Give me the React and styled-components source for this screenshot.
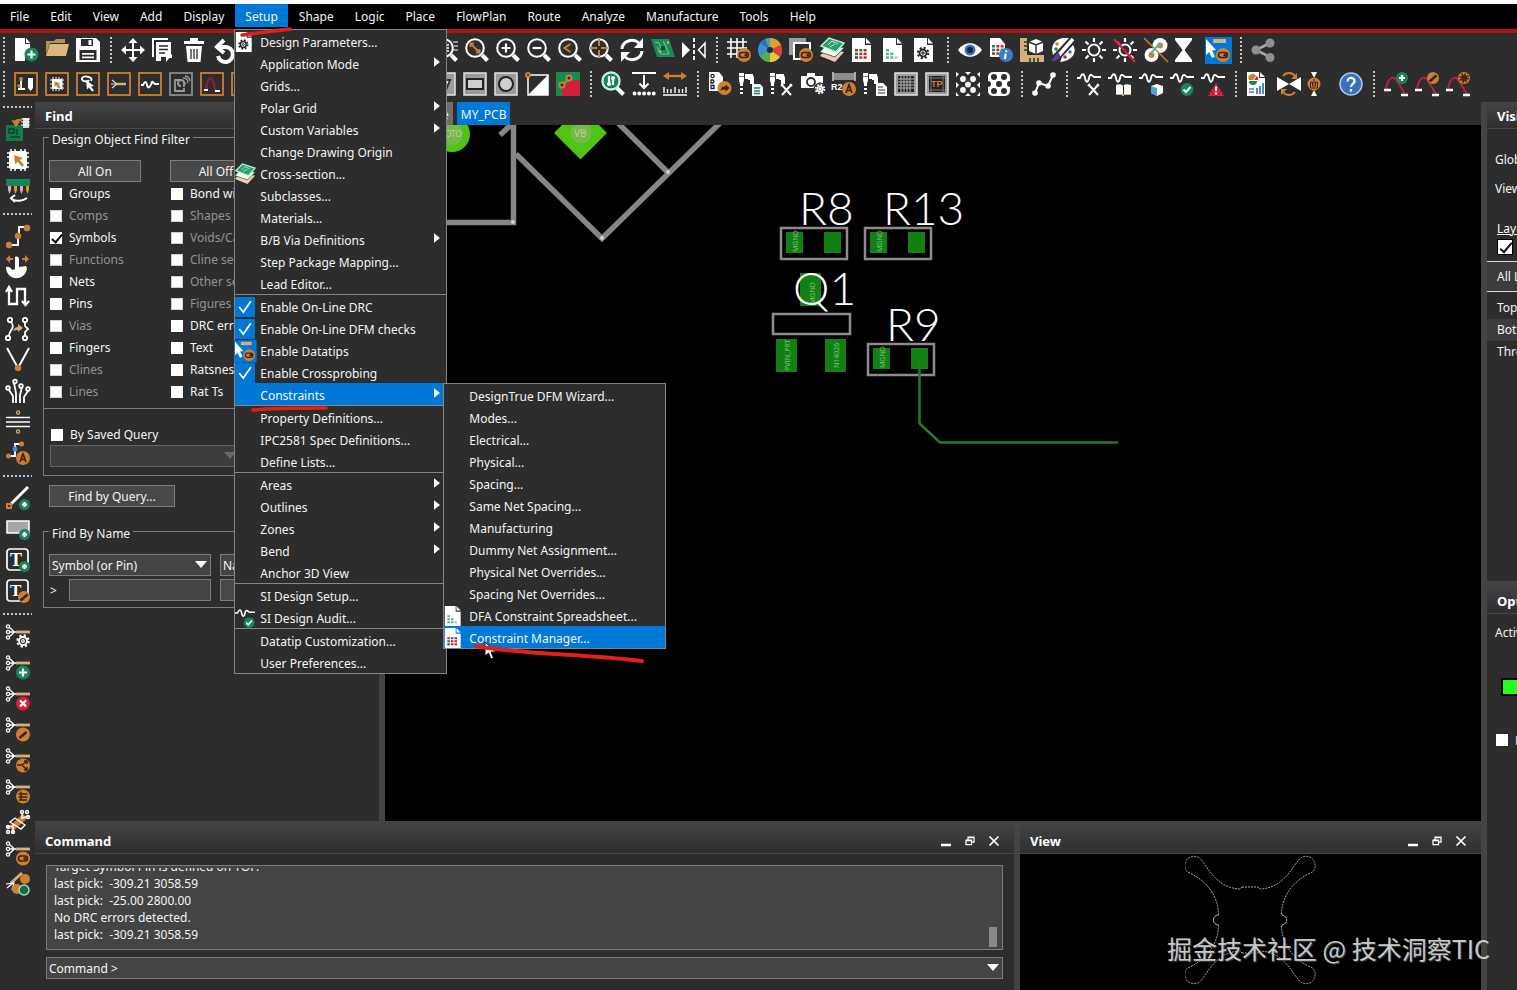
import React, { useState } from 'react'
import styled, { createGlobalStyle, css } from 'styled-components'

const ORANGE = '#cd7f32'
const GREEN = '#17855a'
const TAN = '#d3b07c'
const BLUE = '#0078d7'
const RED = '#d21f3c'
const W = '#ffffff'
const BG = '#2d2d2d'

/* ---------- icon pieces ---------- */

const Svg = ({ size = 24, children }) => (
    <svg width={size} height={size} viewBox="0 0 24 24" fill="none" aria-hidden="true">{children}</svg>
)
const Page = ({ x = 0 }) => <path d={`M${x + 1} 0h13v7h6v17h-19z M${x + 15} 0l5 5.500h-5z`} fill={W} />
const Plus = ({ cx = 17, cy = 17, r = 7 }) => (
    <g>
        <circle cx={cx} cy={cy} r={r} fill={GREEN} />
        <path d={`M${cx - r + 3} ${cy}h${2 * r - 6}M${cx} ${cy - r + 3}v${2 * r - 6}`} stroke={W} strokeWidth="2.200" />
    </g>
)
const Disc = ({ cx = 17, cy = 17, r = 7, fill = ORANGE, children }) => (
    <g>
        <circle cx={cx} cy={cy} r={r} fill={fill} />
        {children}
    </g>
)
const Pencil = ({ cx = 17, cy = 17 }) => (
    <path d={`M${cx - 3.5} ${cy + 3.5}l7-6`} stroke="#3a2410" strokeWidth="2.600" />
)
const Toggle = ({ cx = 17, cy = 17 }) => (
    <Disc cx={cx} cy={cy}>
        <rect x={cx - 4.500} y={cy - 2.500} width="9" height="5" rx="2.500" stroke="#3a2410" strokeWidth="1.500" />
        <circle cx={cx + 2} cy={cy} r="1.600" fill="#3a2410" />
    </Disc>
)
const Gear = ({ cx = 12, cy = 15, r = 4, color = '#222' }) => (
    <g stroke={color}>
        <circle cx={cx} cy={cy} r={r} strokeWidth="1.800" />
        <circle cx={cx} cy={cy} r={r / 3} strokeWidth="1.200" />
        <circle cx={cx} cy={cy} r={r + 1.700} strokeWidth="2" strokeDasharray={`${(r + 1.7) * 0.393} ${(r + 1.7) * 0.393}`} />
    </g>
)
const Lens = ({ children }) => (
    <g>
        <circle cx="10" cy="10" r="8.800" stroke={W} strokeWidth="2" />
        <path d="M17 17l5.500 5.500" stroke={W} strokeWidth="4" />
        {children}
    </g>
)
const Cells = ({ x, y, colors, s = 3, g = 4.300 }) => colors.map((c, i) => (
    c ? <rect key={i} x={x + (i % 3) * g} y={y + Math.floor(i / 3) * g * 0.850} width={s} height={s - 0.500} fill={c} /> : null
))
const Wave = () => <path d="M0 6h3c2-5 4-5 5 0 1 5 3 5 4 0 1-5 3-3 5-1h7" stroke={W} strokeWidth="1.800" />
const Wires = () => (
    <g>
        <g stroke={W} strokeWidth="1.300">
            <circle cx="2" cy="2.500" r="1.600" />
            <circle cx="2" cy="8" r="1.600" />
            <circle cx="2" cy="13.500" r="1.600" />
            <path d="M3.500 3.500l5 4.500-5 4.500M4 8h6" />
        </g>
        <path d="M10 8h14" stroke={TAN} strokeWidth="2.800" />
    </g>
)
const Framed = ({ color = ORANGE, children }) => (
    <g>
        <rect x="1" y="1" width="22" height="22" stroke={color} strokeWidth="1.800" />
        {children}
    </g>
)
const GrayFrame = ({ children }) => (
    <g>
        <rect x="1" y="1" width="22" height="22" fill="#9a9a9a" stroke="#e4e4e4" strokeWidth="1.500" />
        {children}
    </g>
)
const Sun = () => (
    <g stroke={W}>
        <circle cx="12" cy="12" r="5.500" strokeWidth="2" />
        <path d="M12 0v4M12 20v4M0 12h4M20 12h4M3.500 3.500l3 3M17.500 17.500l3 3M20.500 3.500l-3 3M6.500 17.500l-3 3" strokeWidth="2.200" />
    </g>
)
const Drill = () => (
    <g fill={W}>
        <path d="M0 1h5v7l-1 4H1L0 8z" />
        <path d="M6 2h8v5H6z" />
        <path d="M9 3c4-1 6 0 6 3v6h-4V8H9z" />
        <path d="M2.500 12v12" stroke={W} strokeWidth="3" strokeDasharray="2 2" />
        <path d="M0 4.500h5" stroke="#777" />
    </g>
)
const Tools = () => <path d="M12 13l9 10M21 13l-9 10M11 14l2-2M20 12l2 2" stroke={W} strokeWidth="2" />
const ChipDots = () => <path d="M5 1v22M9 1v22M15 1v22M19 1v22M1 5h22M1 9h22M1 15h22M1 19h22" stroke={W} strokeWidth="1.500" />
const Arc = () => (
    <g>
        <path d="M2 17c2-12 8-14 11-8l8 13" stroke="#b9213c" strokeWidth="2" />
        <path d="M0 18h7M17 23h7" stroke={W} strokeWidth="2.600" />
    </g>
)
const CursorTag = () => (
    <g>
        <rect x="-1" y="-1" width="27" height="27" fill={BLUE} />
        <path d="M7 1h13v4H7z" fill={TAN} />
        <Toggle cx={17} cy={17} />
        <path d="M0 1l10 11-4 .5 3 6-3 1.500-3-6-3 3z" fill={W} />
    </g>
)
const ICONS = {
    New: <><path d="M1 0h10v6h5v6l-5 3v8H1zM12 0l4.500 5H12z" fill={W} /><Plus cx={17.500} cy={16.500} /></>,
    Open: <><path d="M1 17V3h8l2-2h9v4H5z" fill="#b38f5a" /><path d="M5 6h19l-3 12H1z" fill="#dcb87f" /></>,
    Save: <><path d="M0 0h20l4 4v20H0z" fill={W} /><path d="M5 1h12v7H5zM3.500 12h17v10h-17z" fill={BG} /><path d="M12.500 2h3v5h-3zM6 15h12v1.800H6zM6 18.500h12v1.800H6z" fill={W} /></>,
    Move: <path d="M12 0l4.500 5H13v6h6V7.500l5 4.500-5 4.500V13h-6v6h3.500L12 24l-4.500-5H11v-6H5v3.500L0 12l5-4.500V11h6V5H7.500z" fill={W} />,
    Copy: <><path d="M0 0h16v2H2v17H0z" fill={W} /><path d="M4 4h15v14l-5 6v-5H9v4H4z" fill={W} /><path d="M7 8h9M7 11.500h9M7 15h6" stroke={BG} strokeWidth="1.500" /><path d="M16 20l4-4v4z" fill={W} /></>,
    Delete: <><path d="M1 3h6V0h8v3h6v3H1zM3 8h16l-1.500 16h-13z" fill={W} /><path d="M8 11v10M11 11v10M14 11v10" stroke={BG} strokeWidth="1.300" /></>,
    Undo: <path d="M3 9h8a7.500 7.500 0 1 1-7 9M10 2L3 9l7 6" stroke={W} strokeWidth="4" />,
    ZoomArea: <Lens><path d="M5 7h10M5 10h10M5 13h10" stroke={W} strokeWidth="1.500" /><path d="M19 4h5M20 8h4M19 12h5" stroke={W} /></Lens>,
    ZoomFit: <Lens><path d="M6 6l8 8M5.500 9V5.500H9M14.500 11v3.500H11" stroke={ORANGE} strokeWidth="1.800" /></Lens>,
    ZoomIn: <Lens><path d="M10 5.500v9M5.500 10h9" stroke={W} strokeWidth="2.200" /></Lens>,
    ZoomOut: <Lens><path d="M5.500 10h9" stroke={W} strokeWidth="2.200" /></Lens>,
    ZoomPrevious: <Lens><path d="M12.500 6l-6 4 6 4" stroke={ORANGE} strokeWidth="2" /></Lens>,
    ZoomCenter: <Lens><path d="M10 1v7M10 12v7M1 10h7M12 10h7" stroke={ORANGE} strokeWidth="2" /></Lens>,
    Refresh: <><path d="M2 11a10 9 0 0 1 17-6M22 13a10 9 0 0 1-17 6" stroke={W} strokeWidth="3" /><path d="M23 0v10h-9zM1 24V14h9z" fill={W} /></>,
    Board: <><path d="M0 1h18l6 18H6z" fill="#1d8a55" /><path d="M4 4l4 1 2 5 5-1 3 7M12 3l3 6M6 9l4 7h8" stroke="#59c48c" strokeWidth="1.200" /><path d="M10 8h4v4h-4z" fill="#0b4a3a" /><path d="M16 4l2 1M8 13l2 1" stroke={TAN} strokeWidth="2" /></>,
    Mirror: <><path d="M0 4l8 8-8 8z" fill={W} /><path d="M12 0v24" stroke={W} strokeWidth="1.800" strokeDasharray="4 2" /><path d="M23 5l-6.500 7L23 19z" stroke={W} strokeWidth="1.500" /></>,
    Grid: <><path d="M4 0v20M10 0v20M16 0v10M0 4h20M0 10h20M0 16h10" stroke={W} strokeWidth="1.600" /><Toggle cx={17} cy={17} /></>,
    Colors: <><circle cx="12" cy="12" r="12" fill="#3c8fd0" /><path d="M12 12V0A12 12 0 0 1 23 7z" fill="#e0a030" /><path d="M12 12l11-5a12 12 0 0 1-1 12z" fill="#d8452c" /><path d="M12 12L2 5a12 12 0 0 1 10-5z" fill="#2d6fb5" /><path d="M12 12l10 7a12 12 0 0 1-10 5z" fill="#e8c63c" /><path d="M12 12v12a12 12 0 0 1-10-6z" fill="#5bae46" /><path d="M12 12l-5-11 5-1z" fill="#45a8a0" /><circle cx="12" cy="12" r="3" fill="#15304a" /></>,
    Layers: <><path d="M0 0h17v5H5v12H0z" fill="#9c9c9c" /><rect x="5" y="5" width="16" height="16" stroke={W} strokeWidth="2" /><Toggle cx={17} cy={17} /></>,
    Section: <><path d="M0 18l7-8 17 4-9 10z" fill="#f6c8b0" /><path d="M0 14l7-8 17 4-9 9z" fill="#fff" stroke={GREEN} /><path d="M1 8l8-8 15 5-8 9z" fill="#26a06c" stroke="#bff0d8" strokeWidth="1.500" /><path d="M8 7l4-4 6 3M10 9l5-3" stroke="#bff0d8" /></>,
    Constraints: <><Page /><Cells x={4} y={11} colors={['#b52a38', '#1c7a4c', '#b52a38', '#1c7a4c', '#b52a38', '#b52a38', '#444', '#b52a38', '#b52a38']} /></>,
    Spreadsheet: <><Page /><Cells x={4} y={11} colors={['#53b98d', null, null, '#53b98d', '#53b98d', null, '#53b98d', '#53b98d', '#9bd3bd']} /></>,
    Parameters: <><Page /><Gear cx={10} cy={15} r={3.500} /></>,
    Eye: <><path d="M0 12c6-9 18-9 24 0-6 9-18 9-24 0z" fill={W} /><circle cx="12" cy="12" r="5.500" fill="#3f6fb0" /><circle cx="12" cy="12" r="3" fill="#13233c" /></>,
    Info: <><path d="M1 0h10l5 6v13H1z" fill={W} /><Cells x={3} y={7} colors={[GREEN, RED, RED, GREEN, RED, GREEN, RED, GREEN, RED]} /><Disc cx={17} cy={17} fill="#3d7cc4"><path d="M17.500 12.500l-.4 1.500M16.800 15.500l-1 5.500" stroke={W} strokeWidth="2.200" /></Disc></>,
    Measure: <><path d="M0 0h7v17h17v7H0z" fill={TAN} /><path d="M4 4h3M4 8h3M4 12h3M10 20v4M14 20v4M18 20v4" stroke={BG} strokeWidth="1.500" /><path d="M9 4l7-3 7 3v9l-7 3-7-3z" fill={W} /><path d="M9 4l7 3 7-3M16 7v9" stroke={BG} strokeWidth="1.500" /></>,
    Palette: <><path d="M1 12C1 5 6 0 13 0h5L4 15l-2 2z" fill={W} /><path d="M22 7c5 8-2 16-13 17l2-5z" fill={W} /><circle cx="6" cy="6" r="1.800" fill={ORANGE} /><circle cx="5" cy="11" r="1.800" fill={GREEN} /><circle cx="19" cy="14" r="1.800" fill="#3d7cc4" /><circle cx="14" cy="19" r="1.800" fill={RED} /><path d="M22 1L8 17" stroke={BG} strokeWidth="5.500" /><path d="M22 1L8 17" stroke={W} strokeWidth="3.500" /><path d="M8 15c3 4-2 9-8 8 3-2 3-7 8-8z" fill="#5b3d9a" /></>,
    Shine: <Sun />,
    Dim: <><Sun /><path d="M1 1l21 23" stroke={RED} strokeWidth="2.500" /></>,
    Vias: <><circle cx="16" cy="7.500" r="7.500" fill={W} /><circle cx="7.500" cy="17" r="7" fill={W} /><circle cx="16" cy="7.500" r="3" fill={ORANGE} /><circle cx="7.500" cy="17" r="3" fill={ORANGE} /><path d="M0 0l24 24" stroke={ORANGE} strokeWidth="1.500" /><path d="M7 15l9-10" stroke="#35c1c9" strokeWidth="2" /></>,
    Waive: <path d="M0 0h17v2L9.500 12l7.500 10v2H0v-2l7.500-10L0 2z" fill={W} />,
    Datatips: <CursorTag />,
    Share: <><path d="M19 5L5 12l14 7" stroke="#a8a8a8" strokeWidth="2.600" /><circle cx="19" cy="5" r="4.500" fill="#909090" /><circle cx="5" cy="12" r="4.500" fill="#909090" /><circle cx="19" cy="19.500" r="4.500" fill="#909090" /></>,

    ModeGeneral: <Framed><path d="M7 6v11M4 17h7" stroke={W} strokeWidth="2" /><circle cx="7" cy="7" r="2" fill={ORANGE} /><circle cx="5" cy="14" r="1.800" fill={ORANGE} /><path d="M14 6h5v10l-2.500 3-2.500-3z" fill={W} /></Framed>,
    ModeEtch: <Framed><path d="M7 7h10v10H7z" fill={W} /><path d="M8 5v14M11 5v14M14 5v14M17 6v12M5 8h14M5 12h14M5 16h14" stroke={W} strokeWidth="1" /><path d="M9.500 9.500l6 2-2 1 2 3-2 1-2-3-2 1z" fill={ORANGE} /></Framed>,
    ModePlace: <Framed><path d="M15 9c3-4-7-6-9-3-1 4 6 4 7 2" stroke={W} strokeWidth="1.800" /><path d="M10 8l8 6-3 .5 3 4-2 1-3-4-2 2z" fill={W} /></Framed>,
    ModeFlow: <Framed><path d="M5 8l5 4-5 4M4 12h6" stroke="#ddd" strokeWidth="1.200" /><path d="M10 12h9" stroke={TAN} strokeWidth="2.500" /></Framed>,
    ModeSignal: <Framed><path d="M3 13h2c2-4 3-4 4 0s3 3 5-3c1-1 2 2 3 2h4" stroke={W} strokeWidth="2" /></Framed>,
    ModeRf: <Framed color="#8a8a8a"><path d="M15 16v3H6V8h6M12 14a3 3 0 1 1 3-3v4" stroke="#9a9a9a" strokeWidth="1.800" /><path d="M14 6c3 0 5 2 5 5M14 9l3 3M16 4c3 0 5 3 5 5" stroke="#9a9a9a" strokeWidth="1.300" /></Framed>,
    ModeShape: <Framed><path d="M6 17c2-13 6-13 8-5l1 6" stroke="#8e2036" strokeWidth="2.200" /><path d="M4 18h4M15 19h5" stroke={W} strokeWidth="2.200" /></Framed>,
    ModeExtra: <Framed />,
    AddPoly: <GrayFrame><path d="M6 8h12l-4 10H8z" stroke={BG} strokeWidth="2" fill={W} /></GrayFrame>,
    AddRect: <GrayFrame><rect x="4" y="7" width="16" height="10" stroke="#222" strokeWidth="2" fill="#cfcfcf" /></GrayFrame>,
    AddCircle: <GrayFrame><circle cx="12" cy="12" r="7" stroke="#222" strokeWidth="2" fill="#cfcfcf" /></GrayFrame>,
    Edit: <><path d="M3 3h20v20H3z" stroke={W} strokeWidth="1.500" /><path d="M23 3v20H3z" fill={W} /><circle cx="3" cy="3" r="2" stroke={ORANGE} strokeWidth="2" fill={BG} /></>,
    Island: <><path d="M0 0h24v24H0z" fill={RED} /><path d="M0 0h24v8h-9L6 17v7H0z" fill="#178a50" /><path d="M6 13l8-7" stroke={ORANGE} strokeWidth="2" /><circle cx="13" cy="6" r="2.500" stroke={ORANGE} strokeWidth="2" fill={BG} /><circle cx="6" cy="13" r="2.500" stroke={ORANGE} strokeWidth="2" fill={BG} /></>,
    Inspect: <><circle cx="10" cy="9" r="8.500" stroke="#bff0d8" strokeWidth="2.500" /><circle cx="10" cy="9" r="7" fill={GREEN} /><path d="M8 4v7M12 6v7" stroke={W} strokeWidth="2.200" /><circle cx="8" cy="12" r="2" fill={W} /><circle cx="12" cy="6" r="2" fill={W} /><path d="M16 16l6.500 6.500" stroke={W} strokeWidth="4" /></>,
    Fanout: <><path d="M0 1h24" stroke={W} strokeWidth="2" /><path d="M12 3v13M7.500 11.500L12 16l4.500-4.500" stroke={W} strokeWidth="2" /><path d="M2.500 21.500h20" stroke={W} strokeWidth="4" strokeLinecap="round" strokeDasharray="0 4.800" /></>,
    Span: <><path d="M3 4h18" stroke={ORANGE} strokeWidth="2.400" /><path d="M6 0L0 4l6 4zM18 0l6 4-6 4z" fill={ORANGE} /><path d="M1 15v6M4.500 17v4M8 17v4M12 15v6M16 17v4M19.500 17v4M23 15v6M0 23h24" stroke={W} strokeWidth="1.400" /></>,
    Odb: <><path d="M1 0h10l4 5v14H1z" fill={W} /><g stroke="#222" strokeWidth="1.300"><circle cx="4.500" cy="4" r="1.600" /><path d="M3 8h2l1 1.500-1 1.500H3z" /><path d="M3 13.500h3v3H3z" /></g><Disc cx={16.500} cy={16}><path d="M12.500 18.500c1-4 3-4 5-4v-2l4 3.500-4 3.500v-2c-2 0-3 0-5 1z" fill="#3a2410" /></Disc></>,
    DrillTable: <><Drill /><path d="M13 12h8l3 3v9H13z" fill={W} /><path d="M15 16h6M15 19h6M15 21.500h6" stroke={GREEN} strokeWidth="1.500" /></>,
    DrillTools: <><Drill /><Tools /></>,
    Snapshot: <><path d="M0 4h6V1h8v3h8v12H0z" fill={W} /><circle cx="10" cy="10" r="4" stroke={BG} strokeWidth="1.800" /><circle cx="19" cy="17" r="6.500" fill={BG} /><Gear cx={19} cy={17} r={2.600} color={W} /></>,
    Rename: <><path d="M2 1h20v7H2z" fill="#8c8c8c" /><path d="M1 0v9M23 0v9" stroke="#aaa" strokeWidth="2" /><text x="-1" y="18" fontSize="9" fontWeight="700" fill={W} fontFamily="Liberation Sans, sans-serif">R2</text><Disc cx={17} cy={17}><path d="M14 21l3-8 3 8M15 18.500h4" stroke="#3a2410" strokeWidth="1.700" /></Disc></>,
    DrillDoc: <><Drill /><path d="M13 11h7l4 4v9H13z" fill={W} /><path d="M15 15h5M15 18h7M15 21h7" stroke={BG} strokeWidth="1.200" /></>,
    PadGrid: <GrayFrame><rect x="4" y="4" width="16" height="16" fill="#222" /><path d="M7 4v16M10 4v16M13 4v16M16 4v16M4 7h16M4 10h16M4 13h16M4 16h16" stroke="#b5b5b5" strokeWidth="1" /></GrayFrame>,
    TestPoint: <GrayFrame><rect x="4" y="4" width="16" height="16" fill="#222" /><path d="M4 6h16M4 18h16M6 4v16M18 4v16" stroke="#777" strokeWidth="1" /><text x="6" y="15" fontSize="9" fontWeight="700" fill={ORANGE} fontFamily="Liberation Sans, sans-serif">TP</text></GrayFrame>,
    Pattern: <g fill={W}><circle cx="7" cy="7" r="2.900" /><circle cx="17" cy="7" r="2.900" /><circle cx="12" cy="12.500" r="2.900" /><circle cx="7" cy="18" r="2.900" /><circle cx="17" cy="18" r="2.900" /><path d="M0 0l3 2-3 3zM24 0l-3 2 3 3zM9 0h6l-3 3zM0 10l3 3-3 3zM24 10l-3 3 3 3zM0 20l3 4H0zM24 20l-3 4h3zM9 24l3-3 3 3z" /></g>,
    Honeycomb: <><rect x="1" y="0" width="22" height="24" rx="5" fill={W} /><g fill={BG}><circle cx="7" cy="5" r="3" /><circle cx="17" cy="5" r="3" /><circle cx="12" cy="12" r="3" /><circle cx="7" cy="19" r="3" /><circle cx="17" cy="19" r="3" /><circle cx="1" cy="12" r="3" /><circle cx="23" cy="12" r="3" /></g></>,
    Net: <><path d="M3 21l4-10 9 3 5-11" stroke={W} strokeWidth="2" /><g fill={W}><circle cx="3" cy="21" r="2.800" /><circle cx="7" cy="11" r="2.800" /><circle cx="16" cy="14" r="2.800" /><circle cx="21" cy="3" r="2.800" /></g></>,
    SiTools: <><Wave /><Tools /></>,
    SiLibrary: <><Wave /><path d="M8 13c3-1 5-1 7 1 2-2 4-2 8-1v10c-3-1-6-1-8 1-2-2-4-2-7-1z" fill={W} /><path d="M15.500 14v9" stroke={BG} /><path d="M8 22.500h15" stroke={TAN} /></>,
    SiModel: <><Wave /><path d="M12 14l6-2 6 2v7l-6 3-6-3z" fill={W} /><path d="M12 14l6 2v8l-6-3z" fill="#4aa3df" /></>,
    SiAudit: <><Wave /><Disc cx={17} cy={17.500} r={6.500} fill={GREEN}><path d="M13.500 17.500l2.500 2.500 4.500-5" stroke={W} strokeWidth="2" /></Disc></>,
    SiWarn: <><Wave /><path d="M15 11l8 13H7z" fill={RED} /><path d="M15 14.500v4.500M15 20.500v2" stroke={W} strokeWidth="2" /></>,
    Report: <><path d="M1 0h12v6h6v18H1z M14 0l5 5h-5z" fill={W} /><path d="M3 8a4 4 0 0 1 7-4L7 8z" fill={ORANGE} /><path d="M3 9h8a4 4 0 0 1-8 0z" fill={GREEN} /><path d="M11 4a4 4 0 0 1 1 4H8z" fill={RED} /><path d="M3 17h5M3 20h5" stroke="#777" strokeWidth="1.500" /><path d="M11 16v6M14 14v8M17 11v11" stroke="#3d7cc4" strokeWidth="1.800" /></>,
    Swap: <><path d="M0 5l12 7L0 19zM24 5l-12 7 12 7z" fill={W} /><path d="M6 4c3-4 9-4 12 0M18 20c-3 4-9 4-12 0" stroke={ORANGE} strokeWidth="2" /><path d="M20 1v6h-6zM4 23v-6h6z" fill={ORANGE} /></>,
    Align: <><path d="M3 0h6L6 6zM3 24h6l-3-6z" fill={W} /><circle cx="6" cy="12" r="6.500" fill={ORANGE} /><path d="M2.500 10h2v4h3v-4h2v6h-7zM6 7v5" stroke="#3a2410" /></>,
    Help: <><circle cx="12" cy="12" r="11" fill="#3a72b8" stroke="#a8c8ee" strokeWidth="1.500" /><path d="M8.500 9.500c0-5 7.500-4.500 7 0-.5 2.500-3.500 2.500-3.500 5.500M12 17v2.500" stroke={W} strokeWidth="2.200" /></>,
    ArcAdd: <><Arc /><Plus cx={18} cy={6} r={6} /></>,
    ArcEdit: <><Arc /><Disc cx={18} cy={6} r={6}><Pencil cx={18} cy={6} /></Disc></>,
    ArcSetup: <><Arc /><Disc cx={18} cy={6} r={6}><Gear cx={18} cy={6} r={2.200} color="#3a2410" /></Disc></>,

    PlaceManual: <><path d="M0 8h17v16H0z" fill="#147a4e" /><path d="M3 12h5v4H3zM11 12v6M4 20h10" stroke="#0b3f2a" strokeWidth="1.500" /><path d="M17 1h6v10h-6z" fill="#ddd" /><path d="M15 2h9M15 5h9M15 8h9" stroke={W} strokeWidth="1" /><path d="M16 3c-5-1-7 0-7 3M7 4l3 5 3-4z" stroke={ORANGE} strokeWidth="1.500" fill={ORANGE} /></>,
    PickPart: <><ChipDots /><rect x="3" y="3" width="18" height="18" rx="2" fill={W} /><path d="M8 7l9 3-3 2 4 5-2 2-4-5-3 2z" fill={ORANGE} /></>,
    Probe: <><path d="M0 0h24v7H0z" fill={GREEN} /><path d="M2 7h3v4l-1.500 4L2 11zM14 7h3v4l-1.500 4-1.500-4z" fill="#e6a8a0" /><path d="M8 7h3v4l-1.500 4L8 11zM20 7h3v4l-1.500 4-1.500-4z" fill="#d69a2c" /><path d="M21 19c-4 3-11 4-15 1M9 16l-4 3 4 4" stroke={W} strokeWidth="2" /></>,
    Connect: <><path d="M3 21h9V10h1V3h9" stroke={W} strokeWidth="2" /><circle cx="3" cy="21" r="3.200" fill={ORANGE} /><circle cx="12" cy="12" r="3.200" fill={ORANGE} /><circle cx="21" cy="4" r="3.200" fill={ORANGE} /></>,
    Slide: <><path d="M9 2c2-1 4 0 4 2v8l7-1c3 3-2 12-8 12C5 24 0 19 0 12c3-1 5 1 6 3l3-1z" fill={W} /><path d="M2 4h5M16 4h5" stroke={ORANGE} strokeWidth="2" /><path d="M4 0L0 4l4 4zM19 0l4 4-4 4z" fill={ORANGE} /></>,
    Delay: <><path d="M3 3v15h8V3h8v15" stroke={W} strokeWidth="2.300" /><path d="M0 6l3-5 3 5M16 15l3.500 4 3.500-4" stroke={W} strokeWidth="2.300" /></>,
    Convert: <><g stroke={W} strokeWidth="1.800"><circle cx="4" cy="3" r="2.200" /><circle cx="2" cy="21" r="2.200" /><circle cx="19" cy="3" r="2.200" /><circle cx="19" cy="21" r="2.200" /><path d="M5 5c5 6-2 8-2 14M19 5v4l3 3-3 3v4" /></g><path d="M7 14c1-3 3-4 5-4V7l5 4-5 4v-2c-2 0-3 0-5 1z" fill={TAN} /></>,
    Vertex: <><path d="M1 0l11 20L23 0" stroke={W} strokeWidth="2" /><circle cx="12" cy="20" r="3.200" fill={ORANGE} /></>,
    Bundle: <g stroke={W} strokeWidth="1.800"><path d="M7 24v-7L3 11M10 24V14L8 4M14 24v-8l2-8M18 24v-6l4-6" /><circle cx="2" cy="9" r="1.800" /><circle cx="9" cy="2.500" r="1.800" /><circle cx="15" cy="7" r="1.800" /><circle cx="22" cy="10" r="1.800" /></g>,
    Spread: <><path d="M0 7.500h24M0 12h24M0 16.500h24" stroke={W} strokeWidth="1.600" /><circle cx="12" cy="2.500" r="1.600" stroke={TAN} strokeWidth="1.300" /><circle cx="12" cy="21.500" r="1.600" stroke={TAN} strokeWidth="1.300" /></>,
    AutoConnect: <><path d="M3 15h6V3h7" stroke={W} strokeWidth="1.800" /><circle cx="2.500" cy="15" r="2.500" fill={ORANGE} /><circle cx="15.500" cy="3" r="2.500" fill={ORANGE} /><circle cx="9" cy="8" r="2.500" fill="#3d8be0" /><Disc><path d="M14 21l3-8 3 8M15 18.500h4" stroke="#3a2410" strokeWidth="1.700" /></Disc></>,
    AddLine: <><path d="M4 19L22 1" stroke={W} strokeWidth="3" /><rect x="1" y="18" width="4" height="4" stroke={ORANGE} strokeWidth="2" /><Plus cx={18.500} cy={18.500} r={5.500} /></>,
    AddShape: <><rect x="1" y="4" width="22" height="12" fill="#a8a8a8" stroke={W} strokeWidth="1.500" /><Plus cx={18.500} cy={17.500} r={5.500} /></>,
    AddText: <><rect x="1" y="1" width="21" height="21" rx="3" stroke={W} strokeWidth="1.700" /><text x="4" y="18" fontSize="18" fontWeight="700" fill={W} fontFamily="Liberation Serif, serif">T</text><Plus cx={18.500} cy={18.500} r={5.500} /></>,
    EditText: <><rect x="1" y="1" width="21" height="21" rx="3" stroke={W} strokeWidth="1.700" /><text x="4" y="17" fontSize="17" fontWeight="700" fill={W} fontFamily="Liberation Serif, serif">T</text><Disc cx={18} cy={18} r={6}><Pencil cx={18} cy={18} /></Disc></>,
    WireSetup: <><Wires /><circle cx="17" cy="17" r="6" fill={BG} /><Gear cx={17} cy={17} r={4} color={W} /></>,
    WireAdd: <><Wires /><Plus cy={17.500} /></>,
    WireDelete: <><Wires /><Disc cy={17.500} fill={RED}><path d="M14 14.500l6 6M20 14.500l-6 6" stroke={W} strokeWidth="2.400" /></Disc></>,
    WireEdit: <><Wires /><Disc cy={17.500}><Pencil cy={17.500} /></Disc></>,
    WireSplit: <><Wires /><Disc cy={17.500}><path d="M11 17h5l4-3M16 17l4 4M18 13h3v3M18 22h3v-3" stroke="#3a2410" strokeWidth="1.500" /></Disc></>,
    WireList: <><Wires /><Disc cy={17.500}><path d="M12.500 15h9M12.500 18h9M13 21h8M15 12.500v9" stroke="#3a2410" strokeWidth="1.300" /></Disc></>,
    WireBridge: <><path d="M5 19L19 6" stroke={ORANGE} strokeWidth="6" /><g stroke={W} strokeWidth="1.400"><path d="M4 12l5-4 10 7-4 4zM16 2v6l7-2M1 17l6-1v7" /><circle cx="16" cy="2" r="1.500" /><circle cx="21" cy="2" r="1.500" /><circle cx="22" cy="7" r="1.500" /><circle cx="2" cy="17" r="1.500" /><circle cx="2" cy="22" r="1.500" /><circle cx="7" cy="22" r="1.500" /></g></>,
    WireToggle: <><Wires /><Toggle cy={17.500} /></>,
    WireGlobal: <><path d="M5 11L16 1" stroke={TAN} strokeWidth="3" /><path d="M0 12l8-1-2 7M1 16l6-5" stroke={W} strokeWidth="1.200" /><circle cx="19" cy="7" r="5" fill={ORANGE} /><circle cx="11" cy="17" r="5" fill={ORANGE} /><circle cx="18" cy="18" r="5" fill="#0f6b4c" stroke="#9fdcc3" strokeWidth="1.500" /></>,
}

const TOP_ROW = ['|', 'New', 'Open', 'Save', '|', 'Move', 'Copy', 'Delete', 'Undo', 182, 'ZoomArea', 'ZoomFit', 'ZoomIn', 'ZoomOut', 'ZoomPrevious', 'ZoomCenter', 'Refresh', 'Board', 'Mirror', '|', 'Grid', 'Colors', 'Layers', 'Section', 'Constraints', 'Spreadsheet', 'Parameters', '|', 'Eye', 'Info', 'Measure', 'Palette', 'Shine', 'Dim', 'Vias', 'Waive', 'Datatips', '|', 'Share']
const SECOND_ROW = ['|', 'ModeGeneral', 'ModeEtch', 'ModePlace', 'ModeFlow', 'ModeSignal', 'ModeRf', 'ModeShape', 'ModeExtra', 163, 'AddPoly', 'AddRect', 'AddCircle', 'Edit', 'Island', '|', 'Inspect', 'Fanout', 'Span', '|', 'Odb', 'DrillTable', 'DrillTools', 'Snapshot', 'Rename', 'DrillDoc', 'PadGrid', 'TestPoint', 'Pattern', 'Honeycomb', '|', 'Net', '|', 'SiTools', 'SiLibrary', 'SiModel', 'SiAudit', 'SiWarn', '|', 'Report', 'Swap', 'Align', 'Help', '|', 'ArcAdd', 'ArcEdit', 'ArcSetup']
const SIDE_ROW = ['|', 'PlaceManual', 'PickPart', 'Probe', '|', 'Connect', 'Slide', 'Delay', 'Convert', 'Vertex', 'Bundle', 'Spread', 'AutoConnect', '|', 'AddLine', 'AddShape', 'AddText', 'EditText', '|', 'WireSetup', 'WireAdd', 'WireDelete', 'WireEdit', 'WireSplit', 'WireList', 'WireBridge', 'WireToggle', 'WireGlobal']

const MENUS = ['File', 'Edit', 'View', 'Add', 'Display', 'Setup', 'Shape', 'Logic', 'Place', 'FlowPlan', 'Route', 'Analyze', 'Manufacture', 'Tools', 'Help']

const SETUP_MENU = [
    { label: 'Design Parameters...', icon: 'Parameters' },
    { label: 'Application Mode', more: true },
    { label: 'Grids...' },
    { label: 'Polar Grid', more: true },
    { label: 'Custom Variables', more: true },
    { label: 'Change Drawing Origin' },
    { label: 'Cross-section...', icon: 'Section' },
    { label: 'Subclasses...' },
    { label: 'Materials...' },
    { label: 'B/B Via Definitions', more: true },
    { label: 'Step Package Mapping...' },
    { label: 'Lead Editor...' },
    null,
    { label: 'Enable On-Line DRC', checked: true },
    { label: 'Enable On-Line DFM checks', checked: true },
    { label: 'Enable Datatips', icon: 'Datatips' },
    { label: 'Enable Crossprobing', checked: true },
    { label: 'Constraints', more: true, open: true },
    null,
    { label: 'Property Definitions...' },
    { label: 'IPC2581 Spec Definitions...' },
    { label: 'Define Lists...' },
    null,
    { label: 'Areas', more: true },
    { label: 'Outlines', more: true },
    { label: 'Zones', more: true },
    { label: 'Bend', more: true },
    { label: 'Anchor 3D View' },
    null,
    { label: 'SI Design Setup...' },
    { label: 'SI Design Audit...', icon: 'SiAudit' },
    null,
    { label: 'Datatip Customization...' },
    { label: 'User Preferences...' },
]

const CONSTRAINT_MENU = [
    { label: 'DesignTrue DFM Wizard...' },
    { label: 'Modes...' },
    { label: 'Electrical...' },
    { label: 'Physical...' },
    { label: 'Spacing...' },
    { label: 'Same Net Spacing...' },
    { label: 'Manufacturing' },
    { label: 'Dummy Net Assignment...' },
    { label: 'Physical Net Overrides...' },
    { label: 'Spacing Net Overrides...' },
    { label: 'DFA Constraint Spreadsheet...', icon: 'Spreadsheet' },
    { label: 'Constraint Manager...', icon: 'Constraints', active: true },
]

const FILTERS = [
    ['Groups', 1], ['Bond wires', 1],
    ['Comps', 0], ['Shapes', 0],
    ['Symbols', 1], ['Voids/Cavities', 0],
    ['Functions', 0], ['Cline segs', 0],
    ['Nets', 1], ['Other segs', 0],
    ['Pins', 1], ['Figures', 0],
    ['Vias', 0], ['DRC errors', 1],
    ['Fingers', 1], ['Text', 1],
    ['Clines', 0], ['Ratsnests', 1],
    ['Lines', 0], ['Rat Ts', 1],
]

const LOG = [
    'Target Symbol Pin is defined on TOP.',
    'last pick:\u00a0 -309.21 3058.59',
    'last pick:\u00a0 -25.00 2800.00',
    'No DRC errors detected.',
    'last pick:\u00a0 -309.21 3058.59',
]

/* ---------- small parts ---------- */

function ToolStrip({ items, vertical }) {
    return (
        <Strip $vertical={vertical}>
            {items.map((item, i) => {
                if (item === '|') return <Grip key={i} $vertical={vertical} />
                if (typeof item === 'number') return <StripGap key={i} $width={item} />
                return (
                    <ToolButton key={i} type="button" aria-label={item}>
                        <Svg>{ICONS[item]}</Svg>
                    </ToolButton>
                )
            })}
        </Strip>
    )
}

function Entry({ item, children }) {
    return (
        <EntryRow>
            <EntryButton type="button" $active={item.active || item.open}>
                <EntryIcon $checked={item.checked}>
                    {item.checked && <Svg size={20}><path d="M5 12l5 6 9-13" stroke={W} strokeWidth="2" /></Svg>}
                    {item.icon && <Svg size={20}>{ICONS[item.icon]}</Svg>}
                </EntryIcon>
                {item.label}
                {item.more && <MoreArrow viewBox="0 0 5 8"><path d="M0 0l5 4-5 4z" fill={W} /></MoreArrow>}
            </EntryButton>
            {children}
        </EntryRow>
    )
}

function SetupMenu() {
    return (
        <Menu>
            {SETUP_MENU.map((item, i) => {
                if (!item) return <MenuLine key={i} />
                return (
                    <Entry key={i} item={item}>
                        {item.open && (
                            <>
                                <SubMenu>
                                    {CONSTRAINT_MENU.map((sub) => <Entry key={sub.label} item={sub} />)}
                                    <ManagerMark viewBox="0 0 176 24">
                                        <path d="M16 1v14l3.500-3 2.500 6 2.500-1-2.500-6h5z" fill={W} stroke="#111" strokeWidth="1" />
                                        <path d="M7 5c40 8 110 8 166 15" stroke="#e0201c" strokeWidth="4" strokeLinecap="round" fill="none" />
                                    </ManagerMark>
                                </SubMenu>
                                <EntryMark viewBox="0 0 80 8">
                                    <path d="M3 5c20-2 46-2 73-2" stroke="#e0201c" strokeWidth="3.500" strokeLinecap="round" fill="none" />
                                </EntryMark>
                            </>
                        )}
                    </Entry>
                )
            })}
        </Menu>
    )
}

function WindowButtons() {
    return (
        <WinButtons>
            <WinButton type="button" aria-label="Minimize"><Svg size={12}><path d="M2 20h20" stroke={W} strokeWidth="5" /></Svg></WinButton>
            <WinButton type="button" aria-label="Restore"><Svg size={12}><path d="M8 9V4h12v10h-5M4 10h11v9H4zM4 11h11M8 5h12" stroke={W} strokeWidth="2.500" /></Svg></WinButton>
            <WinButton type="button" aria-label="Close"><Svg size={12}><path d="M3 3l18 18M21 3L3 21" stroke={W} strokeWidth="3.500" /></Svg></WinButton>
        </WinButtons>
    )
}

function FindPanel() {
    const [on, setOn] = useState({ Symbols: true })
    const setAll = (value) => {
        const next = {}
        FILTERS.forEach(([name, enabled]) => { if (enabled) next[name] = value })
        setOn(next)
    }
    return (
        <FindDock>
            <DockHead>Find</DockHead>
            <FindBody>
                <Group $open>
                    <Legend>Design Object Find Filter</Legend>
                    <FilterGrid>
                        <PushButton type="button" onClick={() => setAll(true)}>All On</PushButton>
                        <PushButton type="button" onClick={() => setAll(false)}>All Off</PushButton>
                        {FILTERS.map(([name, enabled]) => (
                            <CheckLabel key={name} $dim={!enabled}>
                                <CheckBox
                                    type="checkbox"
                                    disabled={!enabled}
                                    checked={!!on[name]}
                                    onChange={() => setOn({ ...on, [name]: !on[name] })}
                                />
                                {name}
                            </CheckLabel>
                        ))}
                    </FilterGrid>
                </Group>
                <QueryBox>
                    <CheckLabel><CheckBox type="checkbox" />By Saved Query</CheckLabel>
                    <Picker $width="190px">
                        <PickerSelect aria-label="Saved query" disabled />
                        <PickerArrow viewBox="0 0 12 7" $dim><path d="M0 0h12L6 7z" /></PickerArrow>
                    </Picker>
                </QueryBox>
                <QueryButton type="button">Find by Query...</QueryButton>
                <Group>
                    <Legend>Find By Name</Legend>
                    <NameGrid>
                        <Picker $width="162px">
                            <PickerSelect aria-label="Object type"><option>Symbol (or Pin)</option></PickerSelect>
                            <PickerArrow viewBox="0 0 12 7"><path d="M0 0h12L6 7z" /></PickerArrow>
                        </Picker>
                        <Picker>
                            <PickerSelect aria-label="Match by"><option>Name</option></PickerSelect>
                            <PickerArrow viewBox="0 0 12 7"><path d="M0 0h12L6 7z" /></PickerArrow>
                        </Picker>
                        <NameLabel>&gt;<NameInput type="text" aria-label="Name" /></NameLabel>
                        <PushButton type="button">More...</PushButton>
                    </NameGrid>
                </Group>
            </FindBody>
        </FindDock>
    )
}

function Resistor({ x, y, name, label }) {
    return (
        <g transform={`translate(${x} ${y})`}>
            <rect x="1" y="1" width="66" height="31" stroke="#8c8c8c" strokeWidth="2.500" fill="none" />
            <path d="M6 5h17v21H6zM44 5h17v21H44z" fill="#138013" />
            <PadText transform="translate(18 25) rotate(-90)">{name}</PadText>
            <RefDes x="19" y="-2">{label}</RefDes>
        </g>
    )
}

function Board() {
    return (
        <BoardSvg>
            <g transform="translate(-385 -125)">
                <circle cx="452" cy="134" r="18" fill="#4fc414" />
                <circle cx="452" cy="134" r="11" fill="#78b84a" />
                <path d="M554 133l26.500 26.500L607 133l-26.500-26.500z" fill="#4fc414" />
                <circle cx="581" cy="133" r="10.500" fill="#78b84a" />
                <text x="574" y="137" fontSize="10" fill="#b5d69a">VB</text>
                <text x="438" y="137" fontSize="8" fill="#b5d69a">MOTO</text>
                <g stroke="#868686" strokeWidth="5.500" fill="none">
                    <path d="M440 222.500h73.500V120M500 135l14-13" />
                    <path d="M516 154l86 84.500L722 121M616 121l52 51.500" />
                </g>
                <g fill="#d0d0d0">
                    <circle cx="513" cy="222" r="2" />
                    <circle cx="602" cy="238" r="2" />
                    <circle cx="668" cy="172" r="2" />
                </g>
                <Resistor x={780} y={227} name="MGND" label="R8" />
                <Resistor x={864} y={227} name="MGND" label="R13" />
                <Resistor x={867} y={343} name="MGND" label="R9" />
                <path d="M800 273h21v33h-21zM776 339h21v33h-21zM825 339h21v33h-21z" fill="#138013" />
                <PadText transform="translate(815 304) rotate(-90)">MGND</PadText>
                <PadText transform="translate(790 371) rotate(-90)">PVIN_PRT</PadText>
                <PadText transform="translate(839 368) rotate(-90)">N14026</PadText>
                <rect x="773" y="314" width="77" height="20" stroke="#8c8c8c" strokeWidth="2.500" fill="none" />
                <RefDes x="793" y="305">Q1</RefDes>
                <path d="M919.500 359v64.500l20.500 19h178" stroke="#1f7f1f" strokeWidth="2.500" fill="none" />
            </g>
        </BoardSvg>
    )
}

function Outline() {
    const half = 'M57 32h16l2 2c23-1 31-20 39.500-30a9 9 0 1 1 13 13c-19 8-31 24-31 43a5 5 0 1 1 0 10M57 32l-2 2c-23-1-31-20-39.500-30a9 9 0 1 0-13 13c19 8 31 24 31 43a5 5 0 1 0 0 10'
    return (
        <svg width="132" height="132" viewBox="0 0 132 132" fill="none" stroke="#a8a8a8" aria-hidden="true">
            <path d={half} strokeDasharray="2 1" />
            <path d={half} strokeDasharray="2 1" transform="matrix(1 0 0 -1 0 130)" />
        </svg>
    )
}

export default function App() {
    return (
        <Shell>
            <GlobalStyle />
            <MenuBar>
                {MENUS.map((name) => (
                    <MenuSlot key={name}>
                        <MenuButton type="button" $active={name === 'Setup'}>{name}</MenuButton>
                        {name === 'Setup' && (
                            <>
                                <SetupMenu />
                                <SetupMark viewBox="0 0 56 12">
                                    <path d="M4 9c14-2 32-4 48-6" stroke="#e0201c" strokeWidth="3.500" strokeLinecap="round" />
                                </SetupMark>
                            </>
                        )}
                    </MenuSlot>
                ))}
            </MenuBar>
            <ToolBars>
                <ToolStrip items={TOP_ROW} />
                <ToolStrip items={SECOND_ROW} />
            </ToolBars>
            <Body>
                <ToolStrip items={SIDE_ROW} vertical />
                <Center>
                    <Work>
                        <FindPanel />
                        <CanvasArea>
                            <Tabs>
                                <Tab type="button">e</Tab>
                                <Tab type="button" $active>MY_PCB</Tab>
                            </Tabs>
                            <Board />
                        </CanvasArea>
                    </Work>
                    <Bottom>
                        <CommandDock>
                            <DockHead $tall>Command<WindowButtons /></DockHead>
                            <CommandBody>
                                <LogBox>
                                    <LogText>
                                        {LOG.map((line, i) => <LogLine key={i}>{line}</LogLine>)}
                                    </LogText>
                                    <Thumb />
                                </LogBox>
                                <Picker>
                                    <PickerSelect aria-label="Command"><option>Command &gt;</option></PickerSelect>
                                    <PickerArrow viewBox="0 0 12 7"><path d="M0 0h12L6 7z" /></PickerArrow>
                                </Picker>
                            </CommandBody>
                        </CommandDock>
                        <ViewDock>
                            <DockHead $tall>View<WindowButtons /></DockHead>
                            <ViewBody><Outline /></ViewBody>
                        </ViewDock>
                    </Bottom>
                </Center>
                <RightColumn>
                    <RightDock $grow={48}>
                        <DockHead>Visibility</DockHead>
                        <RightText $top={20}>Global Visibility</RightText>
                        <RightText $top={7}>Views</RightText>
                        <LayerHead>
                            <a href="#layer">Layer</a>
                            <LayerCheck type="checkbox" aria-label="Layer" defaultChecked />
                        </LayerHead>
                        <LayerRow $shade $ruled>All Layers</LayerRow>
                        <LayerRow>Top</LayerRow>
                        <LayerRow $shade>Bottom</LayerRow>
                        <LayerRow>Through All</LayerRow>
                    </RightDock>
                    <RightDock $grow={41}>
                        <DockHead $tall>Options</DockHead>
                        <RightText $top={8}>Active Class</RightText>
                        <Swatch />
                        <MoreCheck><CheckBox type="checkbox" />Mirror</MoreCheck>
                    </RightDock>
                </RightColumn>
            </Body>
            <Watermark>掘金技术社区 @ 技术洞察TIC</Watermark>
        </Shell>
    )
}

/* ---------- styles ---------- */

const GlobalStyle = createGlobalStyle`
    * { box-sizing: border-box; }
    body {
        margin: 0;
        background: ${BG};
        overflow: hidden;
    }
    body, button, input, select {
        font-family: 'Noto Sans', 'Noto Sans CJK SC', sans-serif;
        font-size: 12px;
        color: #f4f4f4;
    }
`
const Shell = styled.div`
    position: relative;
    display: flex;
    flex-direction: column;
    min-height: 100vh;
    background: ${BG};
`
const MenuBar = styled.nav`
    display: flex;
    gap: 1px;
    height: 33px;
    border-top: 4px solid #fff;
    border-bottom: 4px solid #b01212;
    background: #000;
`
const MenuSlot = styled.div`
    position: relative;
`
const MenuButton = styled.button`
    height: 23px;
    padding: 2px 10px 0;
    border: none;
    line-height: 20px;
    background: ${(p) => (p.$active ? BLUE : 'none')};
`
const Menu = styled.div`
    position: absolute;
    z-index: 10;
    top: 25px;
    left: -1px;
    width: 213px;
    border: 1px solid #858585;
    background: ${BG};
`
const SubMenu = styled.div`
    position: absolute;
    z-index: 11;
    top: 0;
    left: calc(100% - 3px);
    width: 223px;
    border: 1px solid #858585;
    background: ${BG};
`
const MenuLine = styled.hr`
    height: 1px;
    margin: 0;
    border: none;
    background: #858585;
`
const EntryRow = styled.div`
    position: relative;
`
const EntryButton = styled.button`
    display: flex;
    align-items: center;
    width: 100%;
    height: 22px;
    padding: 2px 6px 0 0;
    border: none;
    text-align: left;
    white-space: nowrap;
    background: ${(p) => (p.$active ? BLUE : 'none')};
`
const EntryIcon = styled.span`
    display: flex;
    flex: none;
    width: 20px;
    height: 20px;
    margin-right: 5px;
    background: ${(p) => (p.$checked ? BLUE : 'none')};
    svg { overflow: visible; }
`
const MoreArrow = styled.svg`
    width: 6px;
    height: 10px;
    margin: 0 0 4px auto;
`
const SetupMark = styled.svg`
    position: absolute;
    z-index: 12;
    top: 22px;
    left: 3px;
    width: 56px;
    height: 12px;
    fill: none;
`
const EntryMark = styled.svg`
    position: absolute;
    z-index: 12;
    top: 22px;
    left: 15px;
    width: 80px;
    height: 8px;
`
const ManagerMark = styled.svg`
    position: absolute;
    bottom: -17px;
    left: 25px;
    width: 176px;
    height: 24px;
`
const ToolBars = styled.header`
    display: grid;
    grid-template-rows: 33px 36px;
`
const Strip = styled.div`
    display: flex;
    flex: none;
    align-items: center;
    gap: 7px;
    overflow: hidden;
    ${(p) => p.$vertical && css`
        flex-direction: column;
        width: 35px;
        padding-top: 1px;
    `}
`
const Grip = styled.span`
    flex: none;
    width: 7px;
    height: 26px;
    background: repeating-linear-gradient(#c4c4c4 0 2px, transparent 2px 4px) center / 2px 100% no-repeat;
    ${(p) => p.$vertical && css`
        width: 29px;
        height: 7px;
        background: repeating-linear-gradient(90deg, #c4c4c4 0 2px, transparent 2px 4px) center / 100% 2px no-repeat;
    `}
`
const StripGap = styled.span`
    flex: none;
    width: ${(p) => p.$width}px;
`
const ToolButton = styled.button`
    display: flex;
    flex: none;
    width: 24px;
    height: 24px;
    padding: 0;
    border: none;
    background: none;
    svg { overflow: visible; }
`
const Body = styled.main`
    display: flex;
    flex: 1;
`
const Center = styled.div`
    display: flex;
    flex: 1;
    flex-direction: column;
    min-width: 0;
`
const Work = styled.div`
    display: flex;
    flex: 1;
`
const FindDock = styled.section`
    width: 350px;
    border-right: 6px solid #444;
`
const DockHead = styled.h2`
    display: flex;
    align-items: center;
    height: ${(p) => (p.$tall ? 33 : 27)}px;
    margin: 0;
    padding: ${(p) => (p.$tall ? 8 : 2)}px 10px 0;
    border-bottom: 1px solid #484848;
    font-size: 13px;
    font-weight: 700;
    color: #fff;
    background: linear-gradient(#444, #2f2f2f);
`
const FindBody = styled.div`
    padding: 0 8px;
`
const Group = styled.fieldset`
    min-width: 0;
    margin: 0;
    padding: 15px 5px 6px;
    border: 1px solid #7c7c7c;
    ${(p) => p.$open && 'border-bottom: none;'}
`
const Legend = styled.legend`
    height: 16px;
    padding: 4px 3px 0;
    line-height: 13px;
`
const FilterGrid = styled.div`
    display: grid;
    grid-template-columns: 121px 121px;
    grid-auto-rows: 22px;
    white-space: nowrap;
`
const PushButton = styled.button`
    width: 92px;
    height: 22px;
    padding: 1px 0 0;
    border: 1px solid #7c7c7c;
    background: #484848;
`
const CheckLabel = styled.label`
    display: flex;
    align-items: center;
    gap: 7px;
    height: 22px;
    padding: 1px 0 0 1px;
    color: ${(p) => (p.$dim ? '#929292' : '#f4f4f4')};
`
const CheckBox = styled.input`
    position: relative;
    flex: none;
    appearance: none;
    width: 12px;
    height: 12px;
    margin: 0;
    background: #fff;
    &:disabled {
        border: 1px solid #d0d0d0;
    }
    &:checked::after {
        content: '';
        position: absolute;
        top: 0;
        left: 4px;
        width: 4px;
        height: 9px;
        border: solid #111;
        border-width: 0 2px 2px 0;
        transform: rotate(40deg);
    }
`
const QueryBox = styled.div`
    padding: 14px 6px 8px;
    border: 1px solid #7c7c7c;
`
const QueryButton = styled(PushButton)`
    width: 126px;
    margin: 9px 0 16px 6px;
`
const Picker = styled.div`
    position: relative;
    width: ${(p) => p.$width || 'auto'};
    height: 22px;
`
const PickerSelect = styled.select`
    appearance: none;
    width: 100%;
    height: 22px;
    padding: 1px 2px 0;
    border: 1px solid #7c7c7c;
    border-radius: 0;
    background: #444;
`
const PickerArrow = styled.svg`
    position: absolute;
    top: 7px;
    right: 4px;
    width: 12px;
    height: 7px;
    fill: ${(p) => (p.$dim ? '#6a6a6a' : '#fff')};
    pointer-events: none;
`
const NameGrid = styled.div`
    display: grid;
    grid-template-columns: 162px 1fr;
    gap: 3px 9px;
`
const NameLabel = styled.label`
    display: flex;
    align-items: center;
    justify-content: space-between;
    padding-left: 1px;
`
const NameInput = styled.input`
    width: 142px;
    height: 22px;
    border: 1px solid #7c7c7c;
    background: #444;
`
const CanvasArea = styled.section`
    display: flex;
    flex: 1;
    flex-direction: column;
    min-width: 0;
    background: #000;
`
const Tabs = styled.div`
    display: flex;
    gap: 4px;
    height: 23px;
    padding-left: 53px;
    background: ${BG};
`
const Tab = styled.button`
    height: 23px;
    padding: 1px 4px 0;
    border: none;
    background: ${(p) => (p.$active ? BLUE : '#6e6e6e')};
`
const BoardSvg = styled.svg`
    flex: 1;
    width: 100%;
`
const PadText = styled.text`
    font-size: 7px;
    fill: #7fc07f;
`
const RefDes = styled.text`
    font-family: Lato, sans-serif;
    font-size: 46px;
    font-weight: 300;
    fill: #fff;
`
const Bottom = styled.div`
    display: flex;
    height: 169px;
`
const CommandDock = styled.section`
    display: flex;
    flex: 979;
    flex-direction: column;
`
const CommandBody = styled.div`
    display: flex;
    flex: 1;
    flex-direction: column;
    justify-content: space-between;
    padding: 11px 11px 11px;
`
const LogBox = styled.div`
    display: flex;
    height: 85px;
    padding: 2px 5px 2px 7px;
    border: 1px solid #7c7c7c;
    background: #444;
`
const LogText = styled.div`
    display: flex;
    flex: 1;
    flex-direction: column;
    justify-content: flex-end;
    padding-bottom: 4px;
    overflow: hidden;
`
const LogLine = styled.p`
    flex: none;
    margin: 0;
    line-height: 17px;
`
const Thumb = styled.span`
    align-self: flex-end;
    width: 8px;
    height: 20px;
    background: #8a8a8a;
`
const ViewDock = styled.section`
    display: flex;
    flex: 461;
    flex-direction: column;
    border-left: 6px solid #444;
`
const ViewBody = styled.div`
    display: flex;
    flex: 1;
    justify-content: center;
    padding-top: 1px;
    background: #000;
`
const WinButtons = styled.span`
    display: flex;
    gap: 12px;
    margin-left: auto;
    padding-right: 4px;
`
const WinButton = styled.button`
    display: flex;
    padding: 0;
    border: none;
    background: none;
`
const RightColumn = styled.aside`
    display: flex;
    flex: none;
    flex-direction: column;
    width: 36px;
    border-left: 6px solid #444;
    overflow: hidden;
    white-space: nowrap;
`
const RightDock = styled.section`
    flex: ${(p) => p.$grow} 0 0;
`
const RightText = styled.p`
    margin: ${(p) => p.$top}px 0 0;
    padding-left: 8px;
    line-height: 22px;
`
const LayerHead = styled.div`
    display: flex;
    flex-direction: column;
    margin: 19px 0 6px 10px;
    a {
        line-height: 20px;
        color: #fff;
    }
`
const LayerCheck = styled(CheckBox)`
    width: 16px;
    height: 16px;
    border: 1px solid #000;
    &:checked::after {
        left: 5px;
        height: 11px;
    }
`
const LayerRow = styled.div`
    height: 22px;
    padding-left: 10px;
    line-height: 22px;
    background: ${(p) => (p.$shade ? '#3c3c3c' : 'none')};
    ${(p) => p.$ruled && css`
        height: 31px;
        margin: 2px 0 5px;
        border-top: 1px solid #ddd;
        border-bottom: 1px solid #ddd;
        line-height: 30px;
    `}
`
const Swatch = styled.div`
    height: 18px;
    margin: 34px 0 0 14px;
    border: 2px solid #000;
    border-right: none;
    background: #22ff22;
`
const MoreCheck = styled(CheckLabel)`
    margin: 33px 0 0 8px;
`
const Watermark = styled.p`
    position: absolute;
    right: 27px;
    bottom: 24px;
    margin: 0;
    z-index: 20;
    font-family: 'Noto Sans CJK SC', sans-serif;
    font-size: 25px;
    line-height: 36px;
    color: #c8c8c8;
    text-shadow: 1px 1px 1px #444;
`
